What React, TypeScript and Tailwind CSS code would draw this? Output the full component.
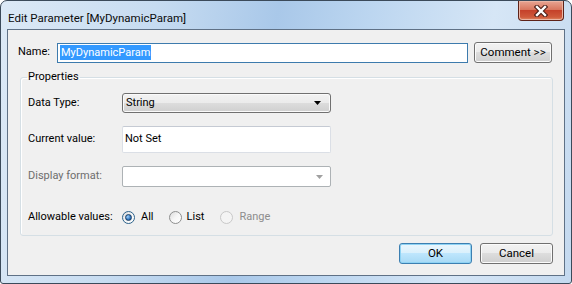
import React from "react";

const FONT = { fontFamily: 'Roboto, "Segoe UI", sans-serif' };

function Radio({ checked, disabled }: { checked?: boolean; disabled?: boolean }) {
  const border = disabled ? "border-[#c8c8c8]" : checked ? "border-[#2c628b]" : "border-[#8e8f8f]";
  return (
    <span
      className={`flex h-[13px] w-[13px] shrink-0 items-center justify-center rounded-full border ${border} ${
        disabled ? "bg-[#f4f4f4]" : "bg-gradient-to-br from-[#dcdcdc] via-[#f6f6f6] to-[#ffffff]"
      }`}
    >
      {checked && (
        <span className="h-[7px] w-[7px] rounded-full border border-[#1b3e63] bg-[radial-gradient(circle_at_35%_35%,#9fd3ff,#1f64b0_70%)]" />
      )}
    </span>
  );
}

function WinButton({ label, primary, className }: { label: string; primary?: boolean; className?: string }) {
  return (
    <div
      className={`flex items-center justify-center whitespace-nowrap rounded-[3px] border text-[11.5px] text-black ${
        primary
          ? "border-[#3c7fb1] shadow-[inset_0_0_0_1px_#8fd3f4] bg-[linear-gradient(#eaf6fd_0%,#d9f0fc_50%,#bee6fd_50%,#a7d9f5_100%)]"
          : "border-[#707070] shadow-[inset_0_0_0_1px_#fbfbfb] bg-[linear-gradient(#f2f2f2_0%,#ebebeb_50%,#dddddd_50%,#cfcfcf_100%)]"
      } ${className ?? ""}`}
    >
      {label}
    </div>
  );
}

export default function App() {
  return (
    <div className="h-[284px] w-[572px] bg-white" style={FONT}>
      <div className="flex h-full w-full flex-col rounded-t-[7px] rounded-b-[3px] border border-[#3b4a5a] bg-[linear-gradient(100deg,#dce9f6_0%,#c7dcf1_25%,#a9c8e9_45%,#bcd6f0_60%,#d6e6f6_80%,#c4d9ef_100%)] px-[6px] pb-[7px]">
        {/* title bar */}
        <div className="flex h-[28px] shrink-0 items-start">
          <div className="pl-[1px] pt-[9px] text-[11.5px] leading-[16px] text-[#0b0b0b]">
            Edit Parameter [MyDynamicParam]
          </div>
          <div className="ml-auto mr-[1px] flex h-[20px] w-[46px] items-center justify-center rounded-b-[4px] border border-t-0 border-[#5d2218] bg-[linear-gradient(#e8a593_0%,#d9775f_45%,#c5412a_50%,#cf5a3b_85%,#e08b66_100%)] shadow-[inset_0_0_0_1px_#eab5a5]">
            <svg width="14" height="12" viewBox="0 0 14 12">
              <path
                d="M3 2 L11 10 M11 2 L3 10"
                stroke="#4a1d16"
                strokeWidth="4.5"
                strokeLinecap="square"
              />
              <path d="M3 2 L11 10 M11 2 L3 10" stroke="#ffffff" strokeWidth="2.4" strokeLinecap="square" />
            </svg>
          </div>
        </div>

        {/* client area */}
        <div className="flex flex-1 flex-col whitespace-nowrap border border-[#5f7186] bg-[#f0f0f0] text-[11px] text-black">
          <div className="flex items-center pl-[10px] pt-[12px]">
            <div className="w-[39px]">Name:</div>
            <div className="flex h-[20px] w-[411px] items-center border border-[#3d7bad] bg-white pl-[2px]">
              <span className="bg-[#3399ff] px-[1px] leading-[15px] text-white">MyDynamicParam</span>
            </div>
            <WinButton label="Comment >>" className="ml-[6px] h-[21px] w-[78px]" />
          </div>

          <fieldset className="ml-[12px] mt-[6px] h-[167px] w-[533px] rounded-[3px] border border-[#d5dfe5] px-[7px] shadow-[inset_1px_1px_0_#ffffff]">
            <legend className="ml-[-1px] px-[1px] leading-[16px]">Properties</legend>
            <div className="mt-[8px] flex h-[20px] items-center">
              <div className="w-[94px]">Data Type:</div>
              <div className="flex h-[20px] w-[209px] items-center rounded-[3px] border border-[#707070] bg-[linear-gradient(#f2f2f2_0%,#ebebeb_50%,#dddddd_50%,#cfcfcf_100%)] pl-[3px] pr-[9px] shadow-[inset_0_0_0_1px_#fafafa]">
                <span>String</span>
                <svg className="ml-auto" width="7" height="4" viewBox="0 0 7 4">
                  <path d="M0 0 H7 L3.5 4 Z" fill="#000" />
                </svg>
              </div>
            </div>
            <div className="mt-[13px] flex h-[27px] items-center">
              <div className="w-[94px]">Current value:</div>
              <div className="flex h-[27px] w-[209px] items-center rounded-[2px] border border-[#dbdfe6] border-t-[#c5cad3] bg-white pl-[2px]">
                Not Set
              </div>
            </div>
            <div className="mt-[13px] flex h-[21px] items-center">
              <div className="w-[94px] text-[#6d6d6d]">Display format:</div>
              <div className="flex h-[21px] w-[209px] items-center rounded-[2px] border border-[#adb2b5] bg-white pr-[7px]">
                <svg className="ml-auto" width="7" height="4" viewBox="0 0 7 4">
                  <path d="M0 0 H7 L3.5 4 Z" fill="#a0a0a0" />
                </svg>
              </div>
            </div>
            <div className="mt-[22px] flex h-[16px] items-center">
              <div className="w-[94px]">Allowable values:</div>
              <Radio checked />
              <span className="ml-[6px]">All</span>
              <span className="ml-[15px]">
                <Radio />
              </span>
              <span className="ml-[5px]">List</span>
              <span className="ml-[16px]">
                <Radio disabled />
              </span>
              <span className="ml-[6px] text-[#8d8d8d]">Range</span>
            </div>
          </fieldset>

          <div className="mt-[7px] flex justify-end gap-[8px] pr-[11px]">
            <WinButton label="OK" primary className="h-[21px] w-[73px]" />
            <WinButton label="Cancel" className="h-[21px] w-[73px]" />
          </div>
        </div>
      </div>
    </div>
  );
}
